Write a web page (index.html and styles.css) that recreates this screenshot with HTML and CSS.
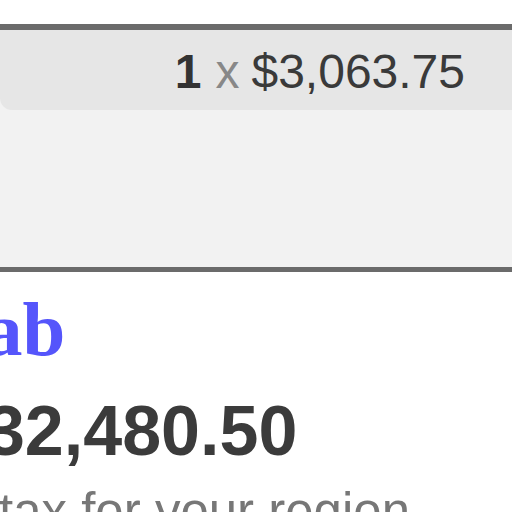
FILE: index.html
```html
<!DOCTYPE html>
<html>
<head>
<meta charset="utf-8">
<link rel="stylesheet" href="styles.css">
</head>
<body>
  <div class="page">
    <section class="cart">
      <div class="line-item">
        <span class="qty">1</span>
        <span class="times">x</span>
        <span class="amount">$3,063.75</span>
      </div>
      <div class="cart-rest"></div>
    </section>
    <h2 class="title">ab</h2>
    <div class="total">$32,480.50</div>
    <p class="note">tax for your region</p>
  </div>
</body>
</html>
```

FILE: styles.css
```css
html, body {
  margin: 0;
  padding: 0;
  background: #ffffff;
  overflow: hidden;
}

.page {
  width: 512px;
  height: 512px;
  overflow: hidden;
  padding-top: 24px;
  box-sizing: border-box;
  font-family: "Liberation Sans", Arial, sans-serif;
}

.cart {
  border-top: 6px solid #6b6b6b;
  border-bottom: 5px solid #6b6b6b;
  background: #f2f2f2;
}

.line-item {
  height: 80px;
  box-sizing: border-box;
  padding-top: 4px;
  padding-right: 47px;
  background: #e6e6e6;
  border-bottom-left-radius: 12px;
  display: flex;
  justify-content: flex-end;
  align-items: flex-start;
  gap: 12px;
  font-size: 48px;
  line-height: 76px;
  color: #3a3a3a;
  white-space: nowrap;
}

.qty {
  font-weight: bold;
  color: #333333;
  margin-right: 2px;
}

.times {
  color: #888888;
}

.cart-rest {
  height: 157px;
}

.title {
  margin: 17px 0 0 -16px;
  font-family: "Liberation Serif", "Times New Roman", serif;
  font-weight: bold;
  font-size: 77px;
  line-height: 80px;
  color: #5555fb;
  white-space: nowrap;
}

.total {
  margin: 22px 0 0 -53px;
  font-weight: bold;
  font-size: 70px;
  line-height: 80px;
  color: #3b3b3b;
  white-space: nowrap;
}

.note {
  margin: 11px 0 0 -1px;
  font-size: 51px;
  line-height: 60px;
  color: #777777;
  white-space: nowrap;
}
```
